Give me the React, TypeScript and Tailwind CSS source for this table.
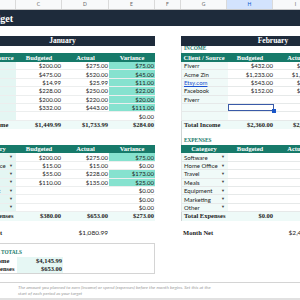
import React from 'react';

// column widths A..J (A is scrolled off to the left)
const W = ['w-[26px]', 'w-[46px]', 'w-[46px]', 'w-[47px]', 'w-[46px]', 'w-[26px]', 'w-[46px]', 'w-[46px]', 'w-[46px]', 'w-[46px]'];
const LETTERS = ['A', 'B', 'C', 'D', 'E', 'F', 'G', 'H', 'I', 'J'];

const serif = "font-['Liberation_Serif',serif]";

const income = [
    ['Upwork', '$200.00', '$275.00', '$75.00'],
    ['Patreon', '$475.00', '$520.00', '$45.00'],
    ['Etsy', '$14.99', '$25.99', '$11.00'],
    ['Fiverr', '$228.00', '$250.00', '$22.00'],
    ['Ko-fi', '$200.00', '$220.00', '$20.00'],
    ['Client', '$332.00', '$443.00', '$111.00'],
    ['', '', '', '$0.00'],
];

const incomeRight: [string, string, string, boolean?][] = [
    ['Fiverr', '$432.00', '$450.00'],
    ['Acme Zin', '$1,233.00', '$1,310.00'],
    ['Etsy.com', '$543.00', '$560.00', true],
    ['Facebook', '$152.00', '$150.00'],
    ['Fiverr', '', ''],
    ['', '', ''],
    ['', '', ''],
];

const expenses = [
    ['Software', '$200.00', '$275.00', '$75.00'],
    ['Home Office', '$15.00', '$15.00', '$0.00'],
    ['Travel', '$55.00', '$228.00', '$173.00'],
    ['Meals', '$110.00', '$135.00', '$25.00'],
    ['Equipment', '', '', '$0.00'],
    ['Marketing', '', '', '$0.00'],
    ['Other', '', '', '$0.00'],
];

const CATS = ['Software', 'Home Office', 'Travel', 'Meals', 'Equipment', 'Marketing', 'Other'];

const Num = ({ w, v, className = '' }: { w: string; v: string; className?: string }) => (
    <div className={`${w} shrink-0 h-full flex items-center justify-end pr-[1px] ${className}`}>{v}</div>
);

const HeaderCells = ({ first }: { first: string }) => (
    <>
        <div className={`${W[1]} shrink-0 h-full flex items-center justify-center whitespace-nowrap`}>{first}</div>
        <div className={`${W[2]} shrink-0 h-full flex items-center justify-center`}>Budgeted</div>
        <div className={`${W[3]} shrink-0 h-full flex items-center justify-center`}>Actual</div>
        <div className={`${W[4]} shrink-0 h-full flex items-center justify-center`}>Variance</div>
    </>
);

const App: React.FC = () => {
    return (
        <div className="w-[300px] h-[300px] overflow-hidden bg-white flex flex-col font-[Lato,sans-serif] text-[6px] text-[#222]">
            <div className="w-[421px] -ml-[56px] flex flex-col shrink-0">
                {/* column letters */}
                <div className="flex h-[10px] bg-[#f8f9fa] border-b border-[#c7c7c7] text-[5px] text-[#666]">
                    {LETTERS.map((l, i) => (
                        <div
                            key={l}
                            className={`${W[i]} shrink-0 h-full flex items-center justify-center border-r border-[#dadada] ${l === 'H' ? 'bg-[#d3e3fd] text-[#0b57d0]' : ''}`}
                        >
                            {l}
                        </div>
                    ))}
                </div>

                {/* title banner */}
                <div className="h-[16px] bg-[#1e2b3b] flex items-center">
                    <div className={`w-[69px] flex justify-end whitespace-nowrap text-white font-bold text-[10px] ${serif}`}>
                        Monthly Budget
                    </div>
                </div>

                <div className="h-[10px]" />

                {/* month bands */}
                <div className={`flex h-[10px] text-white font-bold text-[7.5px] ${serif}`}>
                    <div className={`${W[0]} shrink-0`} />
                    <div className="w-[185px] shrink-0 bg-[#1e2b3b] flex items-center justify-center">January</div>
                    <div className={`${W[5]} shrink-0`} />
                    <div className="w-[184px] shrink-0 bg-[#1e2b3b] flex items-center justify-center">February</div>
                </div>

                {/* INCOME label */}
                <div className={`flex h-[7px] text-[#177a6a] font-bold text-[5.3px] ${serif}`}>
                    <div className={`${W[0]} shrink-0`} />
                    <div className="w-[185px] shrink-0 pl-[2px] flex items-end">INCOME</div>
                    <div className={`${W[5]} shrink-0`} />
                    <div className="w-[184px] shrink-0 pl-[2px] flex items-end border-l border-[#cfd4d4]">INCOME</div>
                </div>

                {/* income header */}
                <div className={`flex h-[9px] text-white font-bold text-[6.5px] ${serif}`}>
                    <div className={`${W[0]} shrink-0`} />
                    <div className="flex bg-[#177a6a]"><HeaderCells first="Client / Source" /></div>
                    <div className={`${W[5]} shrink-0`} />
                    <div className="flex bg-[#177a6a]"><HeaderCells first="Client / Source" /></div>
                </div>

                {/* income rows */}
                {income.map((r, i) => {
                    const rr = incomeRight[i];
                    return (
                        <div key={i} className="flex h-[8.4px]">
                            <div className={`${W[0]} shrink-0`} />
                            <div className="flex border-b border-[#eceeee] box-border">
                                <div className={`${W[1]} shrink-0 h-full bg-[#e4f6f3] pl-[2px] flex items-center whitespace-nowrap`}>{r[0]}</div>
                                <Num w={W[2]} v={r[1]} />
                                <Num w={W[3]} v={r[2]} />
                                <Num w={W[4]} v={r[3]} className={r[3] !== '$0.00' ? 'bg-[#86e2cf]' : ''} />
                            </div>
                            <div className={`${W[5]} shrink-0`} />
                            <div className="flex border-l border-b border-[#e6e9e9] box-border">
                                <div className={`${W[6]} shrink-0 h-full bg-[#f0faf8] pl-[2px] flex items-center whitespace-nowrap ${rr[3] ? 'text-[#1a4fd0] underline' : ''}`}>
                                    {rr[0]}
                                </div>
                                {i === 5 ? (
                                    <div className={`${W[7]} shrink-0 h-full relative border-[1.5px] border-[#3a5aa8]`}>
                                        <div className="absolute -right-[2.5px] -bottom-[2.5px] w-[3.5px] h-[3.5px] bg-[#1a56c8]" />
                                    </div>
                                ) : (
                                    <Num w={W[7]} v={rr[1]} />
                                )}
                                <Num w={W[8]} v={rr[2]} />
                                <Num w={W[9]} v="" />
                            </div>
                        </div>
                    );
                })}

                {/* total income */}
                <div className={`flex h-[8.4px] font-bold text-[6.5px] ${serif}`}>
                    <div className={`${W[0]} shrink-0`} />
                    <div className="flex bg-[#eefaf8]">
                        <div className={`${W[1]} shrink-0 pl-[2px] flex items-center whitespace-nowrap`}>Total Income</div>
                        <Num w={W[2]} v="$1,449.99" />
                        <Num w={W[3]} v="$1,733.99" />
                        <Num w={W[4]} v="$284.00" />
                    </div>
                    <div className={`${W[5]} shrink-0`} />
                    <div className="flex bg-[#eefaf8] border-l border-[#cfd4d4]">
                        <div className={`${W[6]} shrink-0 pl-[2px] flex items-center whitespace-nowrap`}>Total Income</div>
                        <Num w={W[7]} v="$2,360.00" />
                        <Num w={W[8]} v="$2,470.00" />
                        <Num w={W[9]} v="$110.00" />
                    </div>
                </div>

                <div className="flex h-[8.8px]">
                    <div className="w-[237px] shrink-0" />
                    <div className="w-[184px] border-l border-[#cfd4d4]" />
                </div>

                {/* EXPENSES label */}
                <div className={`flex h-[7px] text-[#177a6a] font-bold text-[5.3px] ${serif}`}>
                    <div className={`${W[0]} shrink-0`} />
                    <div className="w-[185px] shrink-0 pl-[2px] flex items-end">EXPENSES</div>
                    <div className={`${W[5]} shrink-0`} />
                    <div className="w-[184px] shrink-0 pl-[2px] flex items-end border-l border-[#cfd4d4]">EXPENSES</div>
                </div>

                {/* expense header */}
                <div className={`flex h-[8.5px] text-white font-bold text-[6.5px] ${serif}`}>
                    <div className={`${W[0]} shrink-0`} />
                    <div className="flex bg-[#177a6a]"><HeaderCells first="Category" /></div>
                    <div className={`${W[5]} shrink-0`} />
                    <div className="flex bg-[#177a6a]"><HeaderCells first="Category" /></div>
                </div>

                {/* expense rows */}
                {expenses.map((r, i) => (
                    <div key={i} className="flex h-[8.4px]">
                        <div className={`${W[0]} shrink-0`} />
                        <div className="flex border-b border-[#eceeee] box-border">
                            <div className={`${W[1]} shrink-0 h-full bg-[#e4f6f3] pl-[2px] pr-[3px] flex items-center justify-between whitespace-nowrap`}>
                                <span>{r[0]}</span>
                                <span className="text-[4px] text-[#444]">▼</span>
                            </div>
                            <Num w={W[2]} v={r[1]} />
                            <Num w={W[3]} v={r[2]} />
                            <Num w={W[4]} v={r[3]} className={r[3] !== '$0.00' ? 'bg-[#86e2cf]' : ''} />
                        </div>
                        <div className={`${W[5]} shrink-0`} />
                        <div className="flex border-l border-b border-[#e6e9e9] box-border">
                            <div className={`${W[6]} shrink-0 h-full bg-[#f0faf8] pl-[2px] pr-[3px] flex items-center justify-between whitespace-nowrap`}>
                                <span>{CATS[i]}</span>
                                <span className="text-[4px] text-[#444]">▼</span>
                            </div>
                            <Num w={W[7]} v="" />
                            <Num w={W[8]} v="" />
                            <Num w={W[9]} v="$0.00" />
                        </div>
                    </div>
                ))}

                {/* total expenses */}
                <div className={`flex h-[8.4px] font-bold text-[6.5px] ${serif}`}>
                    <div className={`${W[0]} shrink-0`} />
                    <div className="flex bg-[#eefaf8]">
                        <div className={`${W[1]} shrink-0 pl-[2px] flex items-center whitespace-nowrap`}>Total Expenses</div>
                        <Num w={W[2]} v="$380.00" />
                        <Num w={W[3]} v="$653.00" />
                        <Num w={W[4]} v="$273.00" />
                    </div>
                    <div className={`${W[5]} shrink-0`} />
                    <div className="flex bg-[#eefaf8] border-l border-[#cfd4d4]">
                        <div className={`${W[6]} shrink-0 pl-[2px] flex items-center whitespace-nowrap`}>Total Expenses</div>
                        <Num w={W[7]} v="$0.00" />
                        <Num w={W[8]} v="$0.00" />
                        <Num w={W[9]} v="$0.00" />
                    </div>
                </div>

                <div className="h-[8.3px]" />

                {/* month net */}
                <div className="flex h-[8px] text-[6.5px]">
                    <div className={`${W[0]} shrink-0`} />
                    <div className={`${W[1]} shrink-0 pl-[2px] flex items-center whitespace-nowrap font-bold ${serif}`}>Month Net</div>
                    <div className={`${W[2]} shrink-0`} />
                    <Num w={W[3]} v="$1,080.99" />
                    <div className={`${W[4]} shrink-0`} />
                    <div className={`${W[5]} shrink-0`} />
                    <div className={`${W[6]} shrink-0 pl-[2px] flex items-center whitespace-nowrap font-bold ${serif}`}>Month Net</div>
                    <div className={`${W[7]} shrink-0`} />
                    <Num w={W[8]} v="$2,470.00" />
                </div>

                <div className="h-[6px]" />

                {/* yearly totals */}
                <div className="flex">
                    <div className={`${W[0]} shrink-0`} />
                    <div className={`w-[185px] shrink-0 border border-[#d4d4d4] flex flex-col font-bold ${serif}`}>
                        <div className="h-[5px]" />
                        <div className="h-[8px] w-[51px] flex items-center justify-end whitespace-nowrap text-[#177a6a] text-[5.3px]">ANNUAL TOTALS</div>
                        <div className="flex h-[8px] text-[6.5px]">
                            <div className={`${W[1]} shrink-0 pl-[2px] flex items-center whitespace-nowrap`}>Total Income</div>
                            <Num w={W[2]} v="$4,145.99" className="bg-[#e6f7f4]" />
                        </div>
                        <div className="flex h-[8px] text-[6.5px]">
                            <div className={`${W[1]} shrink-0 pl-[2px] flex items-center whitespace-nowrap`}>Total Expenses</div>
                            <Num w={W[2]} v="$653.00" className="bg-[#e6f7f4]" />
                        </div>
                    </div>
                </div>

                <div className="h-[8px]" />

                {/* note */}
                <div className="h-[16px] border-t border-[#d4d4d4] pl-[74px] pt-[1px] text-[4.6px] leading-[6px] text-[#9a9a9a] italic whitespace-nowrap">
                    The amount you planned to earn (income) or spend (expenses) before the month begins. Set this at the
                    <br />
                    start of each period as your target
                </div>
            </div>
            <div className="flex-1 bg-[#e1e1e1]" />
        </div>
    );
};

export default App;
